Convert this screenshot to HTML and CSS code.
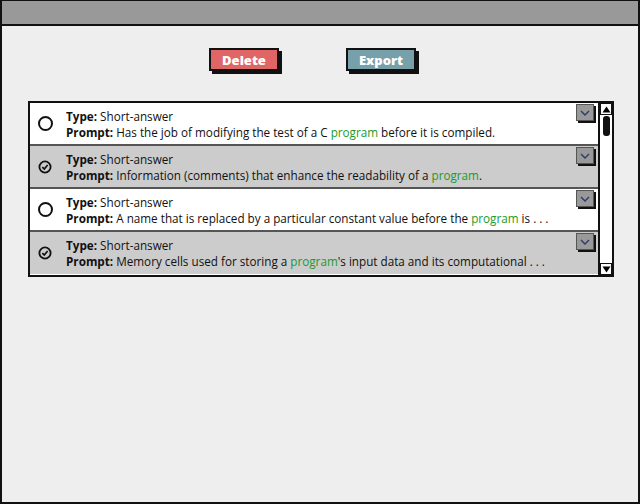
FILE: index.html
```html
<!DOCTYPE html>
<html>
<head>
<meta charset="utf-8">
<link rel="stylesheet" href="styles.css">
</head>
<body>
<div class="window">
  <div class="titlebar"></div>
  <div class="content">
    <div class="actions">
      <button class="btn btn-delete">Delete</button>
      <button class="btn btn-export">Export</button>
    </div>
    <div class="list">
      <div class="rows">
        <div class="row">
          <span class="radio"></span>
          <div class="text">
            <div><b>Type:</b> Short-answer</div>
            <div><b>Prompt:</b> Has the job of modifying the test of a C <span class="kw">program</span> before it is compiled.</div>
          </div>
          <span class="drop"><svg width="10" height="6" viewBox="0 0 10 6"><path d="M1 1 L5 5 L9 1" fill="none" stroke="#2b3a67" stroke-width="1.4"/></svg></span>
        </div>
        <div class="row sel">
          <span class="check"><svg width="14" height="14" viewBox="0 0 14 14"><circle cx="7" cy="7" r="5.6" fill="none" stroke="#111" stroke-width="1.8"/><path d="M4.3 7.2 L6.3 9 L9.6 5" fill="none" stroke="#111" stroke-width="1.7"/></svg></span>
          <div class="text">
            <div><b>Type:</b> Short-answer</div>
            <div><b>Prompt:</b> Information (comments) that enhance the readability of a <span class="kw">program</span>.</div>
          </div>
          <span class="drop"><svg width="10" height="6" viewBox="0 0 10 6"><path d="M1 1 L5 5 L9 1" fill="none" stroke="#2b3a67" stroke-width="1.4"/></svg></span>
        </div>
        <div class="row">
          <span class="radio"></span>
          <div class="text">
            <div><b>Type:</b> Short-answer</div>
            <div><b>Prompt:</b> A name that is replaced by a particular constant value before the <span class="kw">program</span> is . . .</div>
          </div>
          <span class="drop"><svg width="10" height="6" viewBox="0 0 10 6"><path d="M1 1 L5 5 L9 1" fill="none" stroke="#2b3a67" stroke-width="1.4"/></svg></span>
        </div>
        <div class="row sel">
          <span class="check"><svg width="14" height="14" viewBox="0 0 14 14"><circle cx="7" cy="7" r="5.6" fill="none" stroke="#111" stroke-width="1.8"/><path d="M4.3 7.2 L6.3 9 L9.6 5" fill="none" stroke="#111" stroke-width="1.7"/></svg></span>
          <div class="text">
            <div><b>Type:</b> Short-answer</div>
            <div><b>Prompt:</b> Memory cells used for storing a <span class="kw">program</span>'s input data and its computational . . .</div>
          </div>
          <span class="drop"><svg width="10" height="6" viewBox="0 0 10 6"><path d="M1 1 L5 5 L9 1" fill="none" stroke="#2b3a67" stroke-width="1.4"/></svg></span>
        </div>
      </div>
      <div class="scrollbar">
        <span class="arrow up"><svg width="9" height="7" viewBox="0 0 9 7"><path d="M0.5 6.5 L4.5 0.5 L8.5 6.5 Z" fill="#000"/></svg></span>
        <span class="thumb"></span>
        <span class="track"></span>
        <span class="arrow down"><svg width="9" height="7" viewBox="0 0 9 7"><path d="M0.5 0.5 L4.5 6.5 L8.5 0.5 Z" fill="#000"/></svg></span>
      </div>
    </div>
  </div>
</div>
</body>
</html>
```

FILE: styles.css
```css
* { box-sizing: border-box; }
html, body { margin: 0; padding: 0; background: #fff; }
body {
  font-family: "Open Sans", "Lato", sans-serif;
  font-size: 11.7px;
  color: #111;
}
.window {
  width: 640px;
  height: 504px;
  border: 2px solid #111;
  border-top-width: 1px;
  background: #eeeeee;
  display: flex;
  flex-direction: column;
}
.titlebar {
  height: 25px;
  background: #999999;
  border-bottom: 2px solid #111;
  flex: none;
}
.content {
  flex: 1;
  padding: 22px 0 0 26px;
}
.actions {
  display: flex;
  gap: 67px;
  padding-left: 181px;
}
.btn {
  width: 70px;
  height: 23px;
  border: 2px solid #111;
  box-shadow: 3px 3px 0 #111;
  color: #fff;
  font-family: "Open Sans", sans-serif;
  font-weight: 800;
  font-size: 13px;
  padding: 0;
  line-height: 18px;
}
.btn-delete { background: #e06666; }
.btn-export { background: #77a0aa; }
.list {
  margin-top: 30px;
  width: 586px;
  height: 176px;
  border: 2px solid #111;
  background: #fff;
  display: flex;
  position: relative;
}
.rows {
  flex: 1;
  display: flex;
  flex-direction: column;
}
.row {
  height: 43px;
  display: flex;
  align-items: center;
  border-bottom: 2px solid #555;
  background: #fff;
  position: relative;
}
.row:last-child { border-bottom: none; height: 42px; }
.row.sel { background: #cccccc; }
.radio {
  width: 15px;
  height: 15px;
  border: 2px solid #111;
  border-radius: 50%;
  margin-left: 8px;
  flex: none;
}
.check {
  width: 15px;
  height: 14px;
  margin-left: 8px;
  flex: none;
  display: flex;
}
.text {
  margin-left: 13px;
  line-height: 16px;
  white-space: nowrap;
}
.text b { font-weight: 700; }
.kw { color: #1a9a2a; }
.drop {
  position: absolute;
  top: 1px;
  right: 4px;
  width: 18px;
  height: 17px;
  background: #999;
  border: 1px solid #555;
  box-shadow: 2px 2px 0 #111;
  display: flex;
  align-items: center;
  justify-content: center;
}
.scrollbar {
  width: 14px;
  border-left: 2px solid #111;
  display: flex;
  flex-direction: column;
  align-items: center;
  background: #fff;
}
.arrow {
  width: 12px;
  height: 12px;
  display: flex;
  align-items: center;
  justify-content: center;
  border: 1px solid #111;
  flex: none;
}
.thumb {
  width: 7px;
  height: 20px;
  background: #111;
  border-radius: 3px;
  margin-top: 1px;
  flex: none;
}
.track { flex: 1; }
```
